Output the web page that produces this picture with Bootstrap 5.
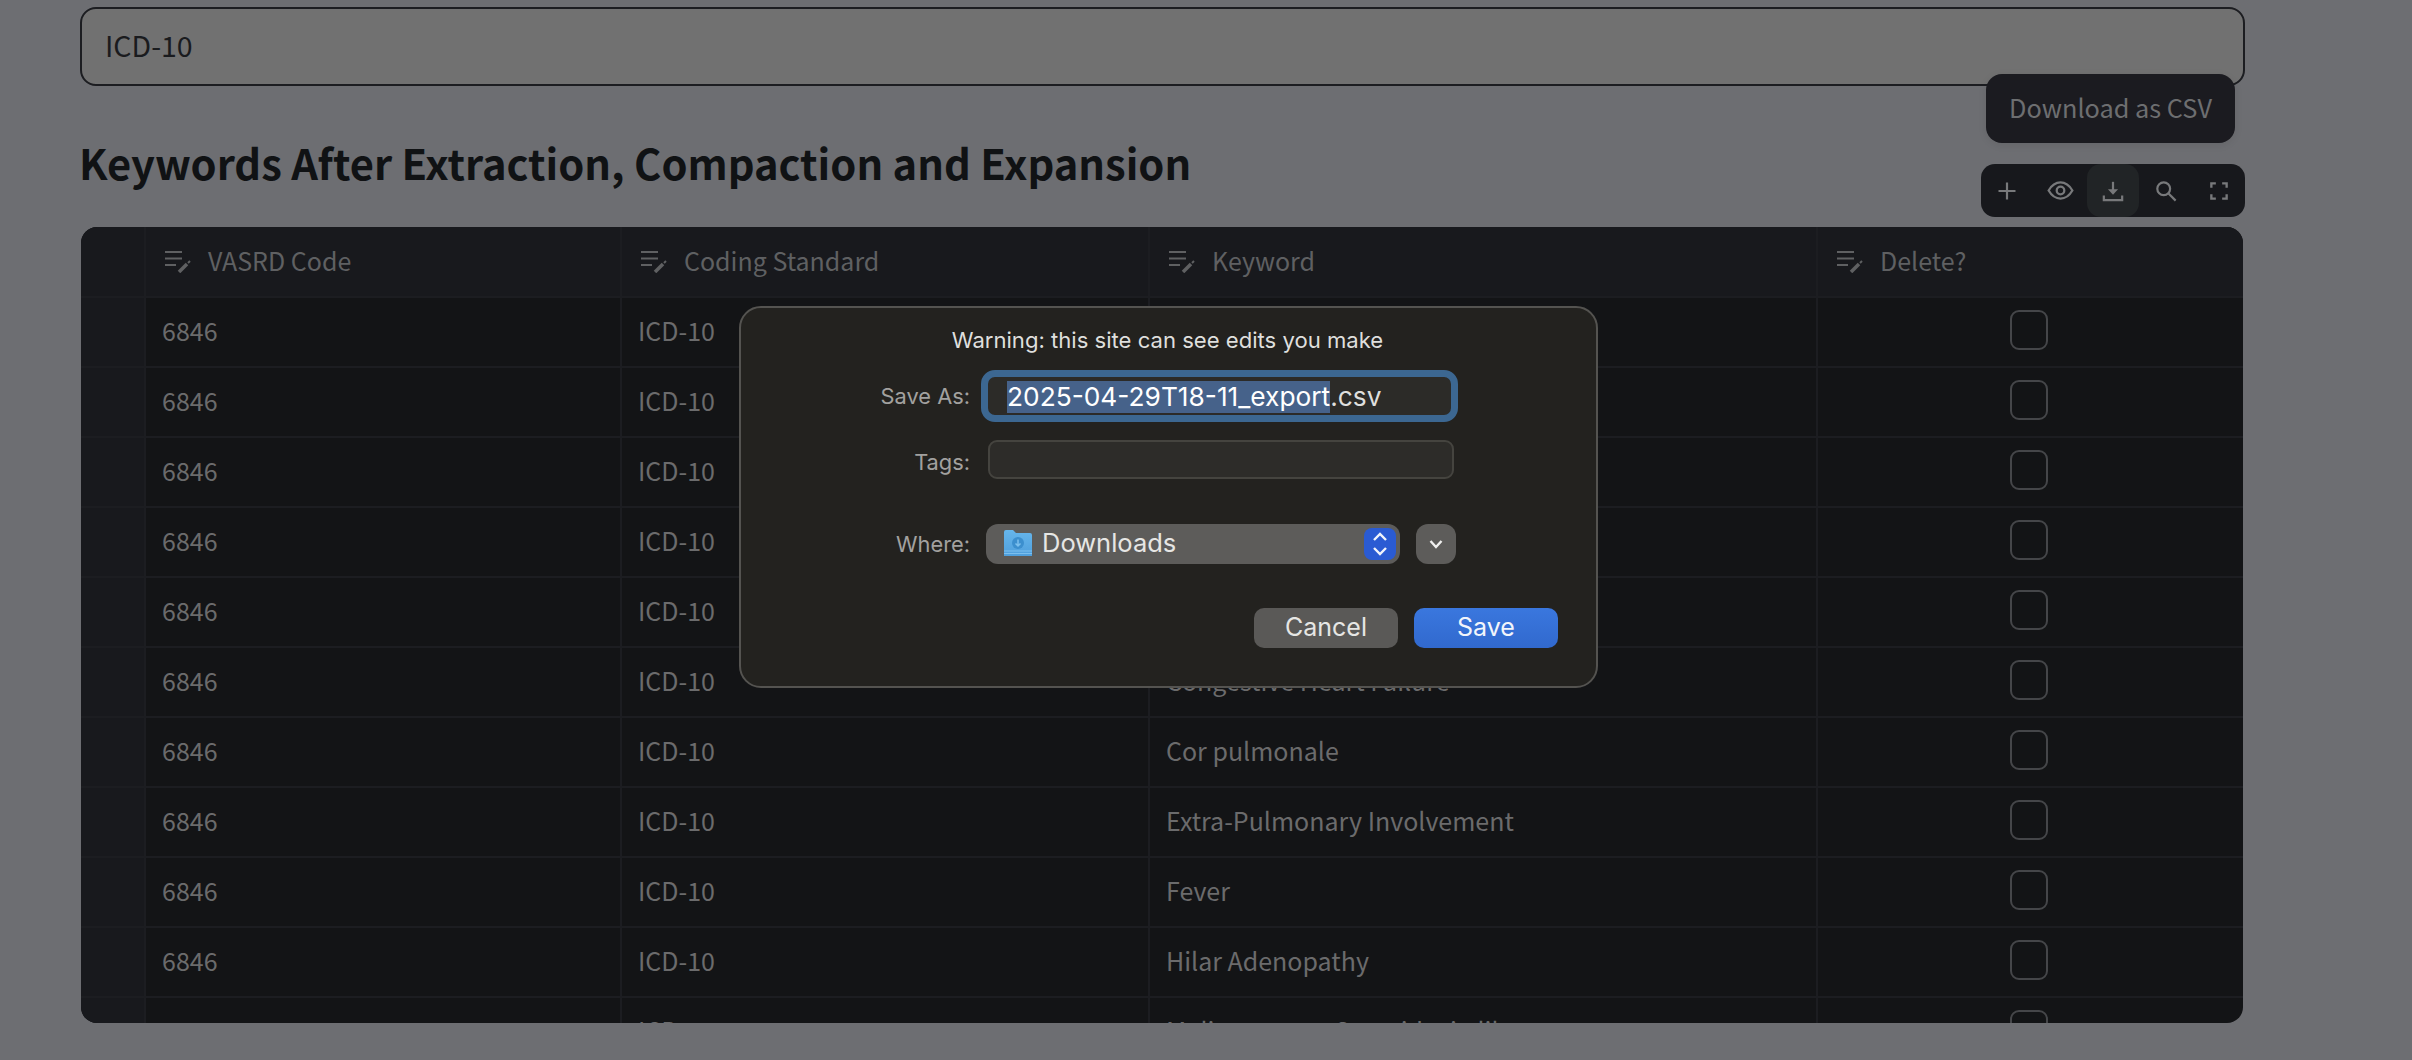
<!DOCTYPE html>
<html lang="en">
<head>
<meta charset="utf-8">
<title>Keywords</title>
<link rel="stylesheet" href="https://cdn.jsdelivr.net/npm/bootstrap@5.3.0/dist/css/bootstrap.min.css">
<style>
html,body{height:1060px;overflow:hidden}
body{background:#6d6e72;font-family:"Noto Sans CJK JP","Noto Sans",sans-serif;position:relative;margin:0}
.page-wrap{padding:7px 167px 0 80px;width:2412px}
.code-field{height:79px;border:2px solid #1c1d21;border-radius:16px;background:#717171;color:#1a1b1e;font-size:28.500px;padding:0 24px 3px 23px;display:flex;align-items:center}
.sec-title{font-size:41.700px;font-weight:700;color:#101214;margin:0 0 0 -1px;height:141px;display:flex;align-items:center;padding-top:12px;line-height:1}
.grid-shell{width:2162px;height:796px;margin-left:1px;border-radius:16px;overflow:hidden;background:#131416}
.kw-grid{display:grid;grid-template-columns:65px 476px 528px 668px 425px;grid-template-rows:71px;grid-auto-rows:70px;font-size:25px;color:#6b6b6c}
.kw-grid>div{border-right:2px solid #1c1d21;border-bottom:2px solid #1c1d21;display:flex;align-items:center;padding:0 16px 3px}
.kw-grid>div:nth-child(5n){border-right:0}
.kw-grid>.hd{background:#18191d;gap:17px;padding-left:19px;padding-bottom:2px;color:#5f6062}
.kw-grid>.idx{background:#18191d;padding:0}
.kw-grid>.chk{justify-content:center;padding-right:20px;padding-bottom:5px}
.tick{width:38px;height:40px;border:2px solid #454649;border-radius:9px;display:block}
.tool-tip{position:absolute;left:1986px;top:74px;width:249px;height:69px;background:#1b1b20;border-radius:16px;color:#6d6e70;font-size:25.300px;display:flex;align-items:center;justify-content:center;padding-bottom:1px;box-shadow:0 2px 8px rgba(0,0,0,.08)}
.tool-bar{position:absolute;left:1981px;top:164px;width:264px;height:53px;background:#17181c;border-radius:14px;display:flex}
.tool-btn{flex:1;display:flex;align-items:center;justify-content:center;border-radius:14px}
.tool-btn.on{background:#212426}
.save-sheet{position:absolute;left:739px;top:306px;width:859px;height:382px;background:#23221f;border:2px solid #545350;border-radius:22px;font-family:Inter,"Liberation Sans",sans-serif;color:#dfdfdd;display:flex;flex-direction:column;padding-top:17px}
.sheet-head{text-align:center;font-size:22.100px;line-height:30px;margin-bottom:15px;padding-right:2px}
.sheet-row{display:flex;align-items:center}
.sheet-lab{width:229px;text-align:right;font-size:21.800px;color:#a2a19f}
.name-box{margin-left:11px;width:477px;height:52px;border:7px solid #3c6791;border-radius:14px;background:#2c2b28;padding:2px 0 0 19px;display:flex;align-items:center;font-size:26.300px}
.name-box mark{background:#46628a;color:#fff;padding:0;line-height:32px;display:inline-block}
.tag-box{margin-left:18px;width:466px;height:39px;background:#2d2c29;border:2px solid #45443f;border-radius:9px}
.tags-lab{padding-top:5px}
.loc-pop{margin-left:16px;width:414px;height:40px;background:#5d5c5a;border-radius:12px;display:flex;align-items:center;font-size:25.500px;color:#e6e6e4;position:relative;padding:0 0 2px 18px;gap:10px}
.step-blue{position:absolute;right:4px;top:4px;width:32px;height:32px;border-radius:8px;background:#2a5bd3;display:flex;align-items:center;justify-content:center}
.loc-more{margin-left:16px;width:40px;height:40px;background:#5d5c5a;border-radius:12px;display:flex;align-items:center;justify-content:center}
.sheet-acts{display:flex;gap:16px;justify-content:flex-end;padding-right:38px;margin-top:44px}
.mac-btn{width:144px;height:40px;border-radius:10px;display:flex;align-items:center;justify-content:center;font-size:25px;background:#5a5957;color:#e6e6e4}
.mac-btn.pri{background:linear-gradient(#3a77de,#3169ce);color:#f2f5fb}
.tags-row{margin-top:18px}
.where-row{margin-top:45px}
</style>
</head>
<body>
<div class="page-wrap">
  <div class="code-field">ICD-10</div>
  <h3 class="sec-title">Keywords After Extraction, Compaction and Expansion</h3>
  <div class="grid-shell">
    <div class="kw-grid" id="g">
      <div class="hd idx"></div>
      <div class="hd"><svg width="26" height="24" viewBox="0 0 26 24"><path d="M0 3h17M0 9.500h17M0 16h11" stroke="#5f6062" stroke-width="2" fill="none"/><path d="M14 23l8-8" stroke="#5f6062" stroke-width="3.500" fill="none"/><path d="M23 14l2-2" stroke="#5f6062" stroke-width="2" fill="none"/></svg>VASRD Code</div>
      <div class="hd"><svg width="26" height="24" viewBox="0 0 26 24"><path d="M0 3h17M0 9.500h17M0 16h11" stroke="#5f6062" stroke-width="2" fill="none"/><path d="M14 23l8-8" stroke="#5f6062" stroke-width="3.500" fill="none"/><path d="M23 14l2-2" stroke="#5f6062" stroke-width="2" fill="none"/></svg>Coding Standard</div>
      <div class="hd"><svg width="26" height="24" viewBox="0 0 26 24"><path d="M0 3h17M0 9.500h17M0 16h11" stroke="#5f6062" stroke-width="2" fill="none"/><path d="M14 23l8-8" stroke="#5f6062" stroke-width="3.500" fill="none"/><path d="M23 14l2-2" stroke="#5f6062" stroke-width="2" fill="none"/></svg>Keyword</div>
      <div class="hd"><svg width="26" height="24" viewBox="0 0 26 24"><path d="M0 3h17M0 9.500h17M0 16h11" stroke="#5f6062" stroke-width="2" fill="none"/><path d="M14 23l8-8" stroke="#5f6062" stroke-width="3.500" fill="none"/><path d="M23 14l2-2" stroke="#5f6062" stroke-width="2" fill="none"/></svg>Delete?</div>
    </div>
  </div>
</div>
<div class="tool-tip">Download as CSV</div>
<div class="tool-bar">
  <div class="tool-btn"><svg width="24" height="24" viewBox="0 0 24 24"><path d="M12 3.500v17M3.500 12h17" stroke="#78797b" stroke-width="2.200"/></svg></div>
  <div class="tool-btn"><svg width="27" height="19" viewBox="0 0 28 20" fill="none" stroke="#78797b" stroke-width="2.400"><path d="M1.500 10C5 4 9 1.500 14 1.500S23 4 26.500 10C23 16 19 18.500 14 18.500S5 16 1.500 10z"/><circle cx="14" cy="10" r="4"/></svg></div>
  <div class="tool-btn on"><svg width="22" height="22" viewBox="0 0 24 24" fill="none" stroke="#78797b" stroke-width="2.400"><path d="M12 2v10"/><path d="M6.500 10h11L12 16z" fill="#78797b" stroke="none"/><path d="M2 17v5h20v-5"/></svg></div>
  <div class="tool-btn"><svg width="22" height="22" viewBox="0 0 24 24" fill="none" stroke="#78797b" stroke-width="2.400"><circle cx="9.500" cy="9.500" r="7"/><path d="M14.500 14.500l8 8"/></svg></div>
  <div class="tool-btn"><svg width="18" height="18" viewBox="0 0 20 20" fill="none" stroke="#78797b" stroke-width="2.600"><path d="M1.500 6.500v-5h5M13.500 1.500h5v5M18.500 13.500v5h-5M6.500 18.500h-5v-5"/></svg></div>
</div>
<div class="save-sheet">
  <div class="sheet-head">Warning: this site can see edits you make</div>
  <div class="sheet-row"><div class="sheet-lab">Save As:</div><div class="name-box"><mark>2025-04-29T18-11_export</mark>.csv</div></div>
  <div class="sheet-row tags-row"><div class="sheet-lab tags-lab">Tags:</div><div class="tag-box"></div></div>
  <div class="sheet-row where-row"><div class="sheet-lab">Where:</div>
    <div class="loc-pop"><svg width="28" height="26" viewBox="0 0 28 26"><defs><linearGradient id="fo" x1="0" y1="0" x2="0" y2="1"><stop offset="0" stop-color="#66b6ec"/><stop offset="1" stop-color="#4f9fdc"/></linearGradient></defs><path d="M0 2a2 2 0 0 1 2-2h7l3 3h14a2 2 0 0 1 2 2v21H0z" fill="url(#fo)"/><path d="M0 21h28M0 23.500h28" stroke="#7cc0ee" stroke-width="1"/><circle cx="14" cy="13" r="6" fill="#3c8fce"/><path d="M14 9.500v6M11.500 13.500l2.500 2.500 2.500-2.500" stroke="#7cc0ee" stroke-width="1.500" fill="none"/></svg>Downloads
      <span class="step-blue"><svg width="16" height="26" viewBox="0 0 16 26" fill="none" stroke="#f1f4fb" stroke-width="2.400"><path d="M2 9l6-6 6 6M2 17l6 6 6-6"/></svg></span></div>
    <div class="loc-more"><svg width="14" height="10" viewBox="0 0 14 10" fill="none" stroke="#efefee" stroke-width="2.400"><path d="M1.500 2l5.500 6 5.500-6"/></svg></div>
  </div>
  <div class="sheet-acts"><div class="mac-btn">Cancel</div><div class="mac-btn pri">Save</div></div>
</div>
<script src="https://cdn.jsdelivr.net/npm/bootstrap@5.3.0/dist/js/bootstrap.bundle.min.js"></script>
<script>
const kw=["","","","","","Congestive Heart Failure","Cor pulmonale","Extra-Pulmonary Involvement","Fever","Hilar Adenopathy","Malignancy or Sarcoidosis-like"];
const g=document.getElementById('g');
kw.forEach(k=>{g.insertAdjacentHTML('beforeend',`<div class="idx"></div><div>6846</div><div>ICD-10</div><div>${k}</div><div class="chk"><span class="tick"></span></div>`)});
</script>
</body>
</html>
